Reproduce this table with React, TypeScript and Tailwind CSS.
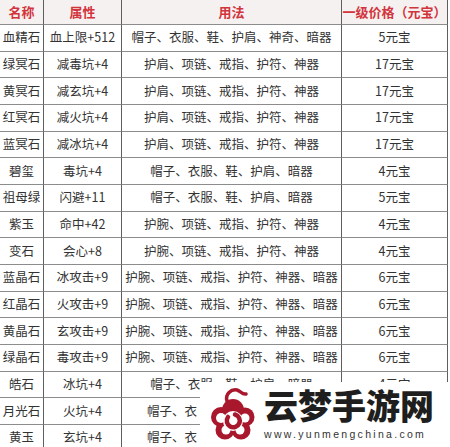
const rows = [
  ['血精石', '血上限+512', '帽子、衣服、鞋、护肩、神奇、暗器', '5元宝'],
  ['绿冥石', '减毒坑+4', '护肩、项链、戒指、护符、神器', '17元宝'],
  ['黄冥石', '减玄坑+4', '护肩、项链、戒指、护符、神器', '17元宝'],
  ['红冥石', '减火坑+4', '护肩、项链、戒指、护符、神器', '17元宝'],
  ['蓝冥石', '减冰坑+4', '护肩、项链、戒指、护符、神器', '17元宝'],
  ['碧玺', '毒坑+4', '帽子、衣服、鞋、护肩、暗器', '4元宝'],
  ['祖母绿', '闪避+11', '帽子、衣服、鞋、护肩、暗器', '5元宝'],
  ['紫玉', '命中+42', '护腕、项链、戒指、护符、神器', '4元宝'],
  ['变石', '会心+8', '护腕、项链、戒指、护符、神器', '4元宝'],
  ['蓝晶石', '冰攻击+9', '护腕、项链、戒指、护符、神器、暗器', '6元宝'],
  ['红晶石', '火攻击+9', '护腕、项链、戒指、护符、神器、暗器', '6元宝'],
  ['黄晶石', '玄攻击+9', '护腕、项链、戒指、护符、神器、暗器', '6元宝'],
  ['绿晶石', '毒攻击+9', '护腕、项链、戒指、护符、神器、暗器', '6元宝'],
  ['皓石', '冰坑+4', '帽子、衣服、鞋、护肩、暗器', '4元宝'],
  // last two prices sit under the watermark
  ['月光石', '火坑+4', '帽子、衣', ''],
  ['黄玉', '玄坑+4', '帽子、衣', ''],
];

const headers = ['名称', '属性', '用法', '一级价格（元宝）'];

const cell =
  'flex items-center justify-center whitespace-nowrap border-b border-r border-b-[#8c8c8c] border-r-[#5e5e5e]';

const Logo = () => (
  <svg width="46" height="54" viewBox="0 0 46 54">
    <g fill="#a8172c">
      <circle cx="11" cy="30" r="10" />
      <circle cx="15" cy="43" r="9.5" />
      <circle cx="31" cy="43" r="9.5" />
      <circle cx="35" cy="30" r="9.5" />
      <circle cx="23" cy="23" r="11" />
    </g>
    <g fill="#fff">
      <circle cx="11" cy="31" r="5" />
      <circle cx="16" cy="43" r="4.5" />
      <circle cx="30" cy="43" r="4.5" />
      <circle cx="35" cy="31" r="4.5" />
      <circle cx="23" cy="34" r="10" />
    </g>
    <path d="M18 30 A6.5 6.5 0 1 0 25 27.5" fill="none" stroke="#a8172c" strokeWidth="4.5" strokeLinecap="round" />
    <path d="M17 14 C15 7 21 2 27 3 C31 4 32 8 36 7" fill="none" stroke="#a8172c" strokeWidth="3.5" strokeLinecap="round" />
  </svg>
);

export default function App() {
  return (
    <div className="relative h-[447px] w-[450px] overflow-hidden bg-white font-['Microsoft_YaHei','Noto_Sans_CJK_SC',sans-serif] text-[12.5px] text-[#333]">
      <div className="grid w-[448px] grid-cols-[44px_78px_220px_106px]">
        {headers.map(h => (
          <div key={h} className={`${cell} h-[25px] bg-[#f6f1f1] font-bold text-[13px] text-[#d2343c]`}>
            {h}
          </div>
        ))}
        {rows.map(r =>
          r.map((c, i) => (
            <div key={r[0] + i} className={`${cell} h-[26.67px] ${i === 2 && c.length < 6 ? 'justify-start pl-[25px]' : ''}`}>
              {c}
            </div>
          ))
        )}
      </div>

      {/* watermark */}
      <div className="absolute left-[200px] top-[382px] flex h-[65px] w-[250px] items-start bg-white pl-[10px] pt-[5px]">
        <Logo />
        <div className="ml-[8px] flex flex-col">
          <div className="text-[34px] font-black leading-[36px] text-[#1e1e1e]">云梦手游网</div>
          <div className="mt-[5px] font-['Liberation_Sans',sans-serif] text-[10.5px] leading-[12px] tracking-[2.3px] text-[#333]">
            www.yunmengchina.com
          </div>
        </div>
      </div>
    </div>
  );
}
